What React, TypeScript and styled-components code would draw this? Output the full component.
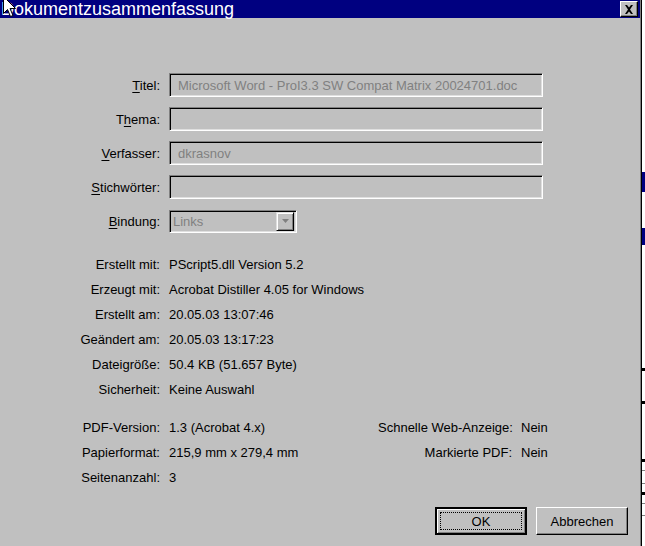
import React from "react";
import styled, { createGlobalStyle } from "styled-components";

const GlobalStyle = createGlobalStyle`
  html, body {
    margin: 0;
    padding: 0;
    background: #fff;
    overflow: hidden;
  }
  body {
    font-family: "Liberation Sans", Arial, sans-serif;
  }
`;

const Screen = styled.div`
  position: relative;
  display: flex;
  width: 645px;
  height: 546px;
  overflow: hidden;
`;

const Dialog = styled.div`
  display: flex;
  flex-direction: column;
  width: 641px;
  height: 546px;
  background: #c0c0c0;
  border-right: 1px solid #000;
  box-shadow: inset -1px 0 #808080;
  font-size: 13px;
  color: #000;
`;

const TitleBar = styled.div`
  display: flex;
  align-items: center;
  justify-content: space-between;
  height: 18px;
  margin-right: 1px;
  padding: 0 2px 0 1px;
  background: #000080;
  color: #fff;
  font-size: 18px;
  line-height: 18px;
`;

const CloseButton = styled.div`
  box-sizing: border-box;
  display: flex;
  align-items: center;
  justify-content: center;
  width: 18px;
  height: 16px;
  background: #c0c0c0;
  border: 1px solid;
  border-color: #fff #000 #000 #fff;
  box-shadow: inset -1px -1px #808080;
`;

const Body = styled.div`
  flex: 1;
  display: flex;
  flex-direction: column;
  padding: 55px 13px 11px 0;
`;

const FormGrid = styled.div`
  display: grid;
  grid-template-columns: 160px 374px;
  grid-auto-rows: 24px;
  column-gap: 9px;
  row-gap: 10px;
  align-items: center;
`;

const Label = styled.div`
  text-align: right;
  white-space: nowrap;
`;

const Key = styled.span`
  text-decoration: underline;
  text-underline-offset: 2px;
`;

const Field = styled.div`
  box-sizing: border-box;
  height: 24px;
  display: flex;
  align-items: center;
  padding-left: 8px;
  background: #c0c0c0;
  color: #808080;
  border: 1px solid;
  border-color: #808080 #fff #fff #808080;
  box-shadow: inset 1px 1px #000, inset -1px -1px #dfdfdf;
  white-space: nowrap;
  overflow: hidden;
`;

const Combo = styled(Field)`
  width: 128px;
  height: 23px;
  padding: 0 2px 0 3px;
  justify-content: space-between;
`;

const DropButton = styled.div`
  box-sizing: border-box;
  width: 18px;
  height: 19px;
  display: flex;
  align-items: center;
  justify-content: center;
  background: #c0c0c0;
  border: 1px solid;
  border-color: #dfdfdf #000 #000 #dfdfdf;
  box-shadow: inset 1px 1px #fff, inset -1px -1px #808080;
`;

const InfoGrid = styled.div<{ $top: number }>`
  display: grid;
  grid-template-columns: 160px 200px 134px auto;
  grid-auto-rows: 25px;
  column-gap: 9px;
  align-items: center;
  margin-top: ${(p) => p.$top}px;
  white-space: nowrap;
`;

const Value = styled.div<{ $wide?: boolean }>`
  white-space: nowrap;
  grid-column: ${(p) => (p.$wide ? "2 / 5" : "auto")};
`;

const Buttons = styled.div`
  margin-top: auto;
  display: flex;
  justify-content: flex-end;
  gap: 9px;
`;

const Button = styled.div<{ $default?: boolean }>`
  box-sizing: border-box;
  width: 92px;
  height: 28px;
  display: flex;
  align-items: center;
  justify-content: center;
  position: relative;
  background: #c0c0c0;
  border: ${(p) => (p.$default ? "2px solid #000" : "1px solid")};
  border-color: ${(p) => (p.$default ? "#000" : "#fff #000 #000 #fff")};
  box-shadow: ${(p) =>
    p.$default
      ? "inset 1px 1px #fff, inset -1px -1px #808080"
      : "inset -1px -1px #808080"};
`;

const Focus = styled.span`
  position: absolute;
  inset: 3px;
  border: 1px dotted #000;
`;

const Strip = styled.div`
  display: flex;
  flex-direction: column;
  width: 3px;
  background: #fff;
`;

const Mark = styled.div<{ $gap: number; $h: number; $c: string }>`
  margin-top: ${(p) => p.$gap}px;
  height: ${(p) => p.$h}px;
  background: ${(p) => p.$c};
  flex-shrink: 0;
`;

const Cursor = styled.svg`
  position: absolute;
  left: 3px;
  top: -4px;
`;

const marks = [
  { gap: 172, h: 20, c: "#000080" },
  { gap: 36, h: 17, c: "#000080" },
  { gap: 123, h: 3, c: "#000" },
  { gap: 30, h: 3, c: "#000" },
  { gap: 55, h: 3, c: "#000" },
  { gap: 8, h: 1, c: "#808080" },
  { gap: 12, h: 1, c: "#808080" },
  { gap: 8, h: 3, c: "#000" },
  { gap: 8, h: 1, c: "#808080" },
  { gap: 11, h: 1, c: "#808080" },
];

export default function App() {
  return (
    <>
      <GlobalStyle />
      <Screen>
        <Dialog>
          <TitleBar>
            <span>Dokumentzusammenfassung</span>
            <CloseButton>
              <svg width="10" height="9" viewBox="0 0 10 9">
                <path
                  d="M1 0h2l2 2.5L7 0h2L6 4.5 9 9H7L5 6.5 3 9H1l3-4.5z"
                  fill="#000"
                />
              </svg>
            </CloseButton>
          </TitleBar>
          <Body>
            <FormGrid>
              <Label>
                <Key>T</Key>itel:
              </Label>
              <Field>Microsoft Word - ProI3.3 SW Compat Matrix 20024701.doc</Field>
              <Label>
                T<Key>h</Key>ema:
              </Label>
              <Field />
              <Label>
                <Key>V</Key>erfasser:
              </Label>
              <Field>dkrasnov</Field>
              <Label>
                <Key>S</Key>tichwörter:
              </Label>
              <Field />
              <Label>
                <Key>B</Key>indung:
              </Label>
              <Combo>
                <span>Links</span>
                <DropButton>
                  <svg width="7" height="4" viewBox="0 0 7 4">
                    <path d="M0 0h7L3.5 4z" fill="#808080" />
                  </svg>
                </DropButton>
              </Combo>
            </FormGrid>

            <InfoGrid $top={19}>
              <Label>Erstellt mit:</Label>
              <Value $wide>PScript5.dll Version 5.2</Value>
              <Label>Erzeugt mit:</Label>
              <Value $wide>Acrobat Distiller 4.05 for Windows</Value>
              <Label>Erstellt am:</Label>
              <Value $wide>20.05.03 13:07:46</Value>
              <Label>Geändert am:</Label>
              <Value $wide>20.05.03 13:17:23</Value>
              <Label>Dateigröße:</Label>
              <Value $wide>50.4 KB (51.657 Byte)</Value>
              <Label>Sicherheit:</Label>
              <Value $wide>Keine Auswahl</Value>
            </InfoGrid>

            <InfoGrid $top={13}>
              <Label>PDF-Version:</Label>
              <Value>1.3 (Acrobat 4.x)</Value>
              <Label>Schnelle Web-Anzeige:</Label>
              <Value>Nein</Value>
              <Label>Papierformat:</Label>
              <Value>215,9 mm x 279,4 mm</Value>
              <Label>Markierte PDF:</Label>
              <Value>Nein</Value>
              <Label>Seitenanzahl:</Label>
              <Value>3</Value>
            </InfoGrid>

            <Buttons>
              <Button $default>
                <Focus />
                OK
              </Button>
              <Button>Abbrechen</Button>
            </Buttons>
          </Body>
        </Dialog>
        <Strip>
          {marks.map((m, i) => (
            <Mark key={i} $gap={m.gap} $h={m.h} $c={m.c} />
          ))}
        </Strip>
        <Cursor width="13" height="22" viewBox="0 0 13 22">
          <path
            d="M0.5 0.5v17l4-4 3 7 2.5-1-3-7h5.5z"
            fill="#fff"
            stroke="#000"
            strokeWidth="1"
          />
        </Cursor>
      </Screen>
    </>
  );
}
